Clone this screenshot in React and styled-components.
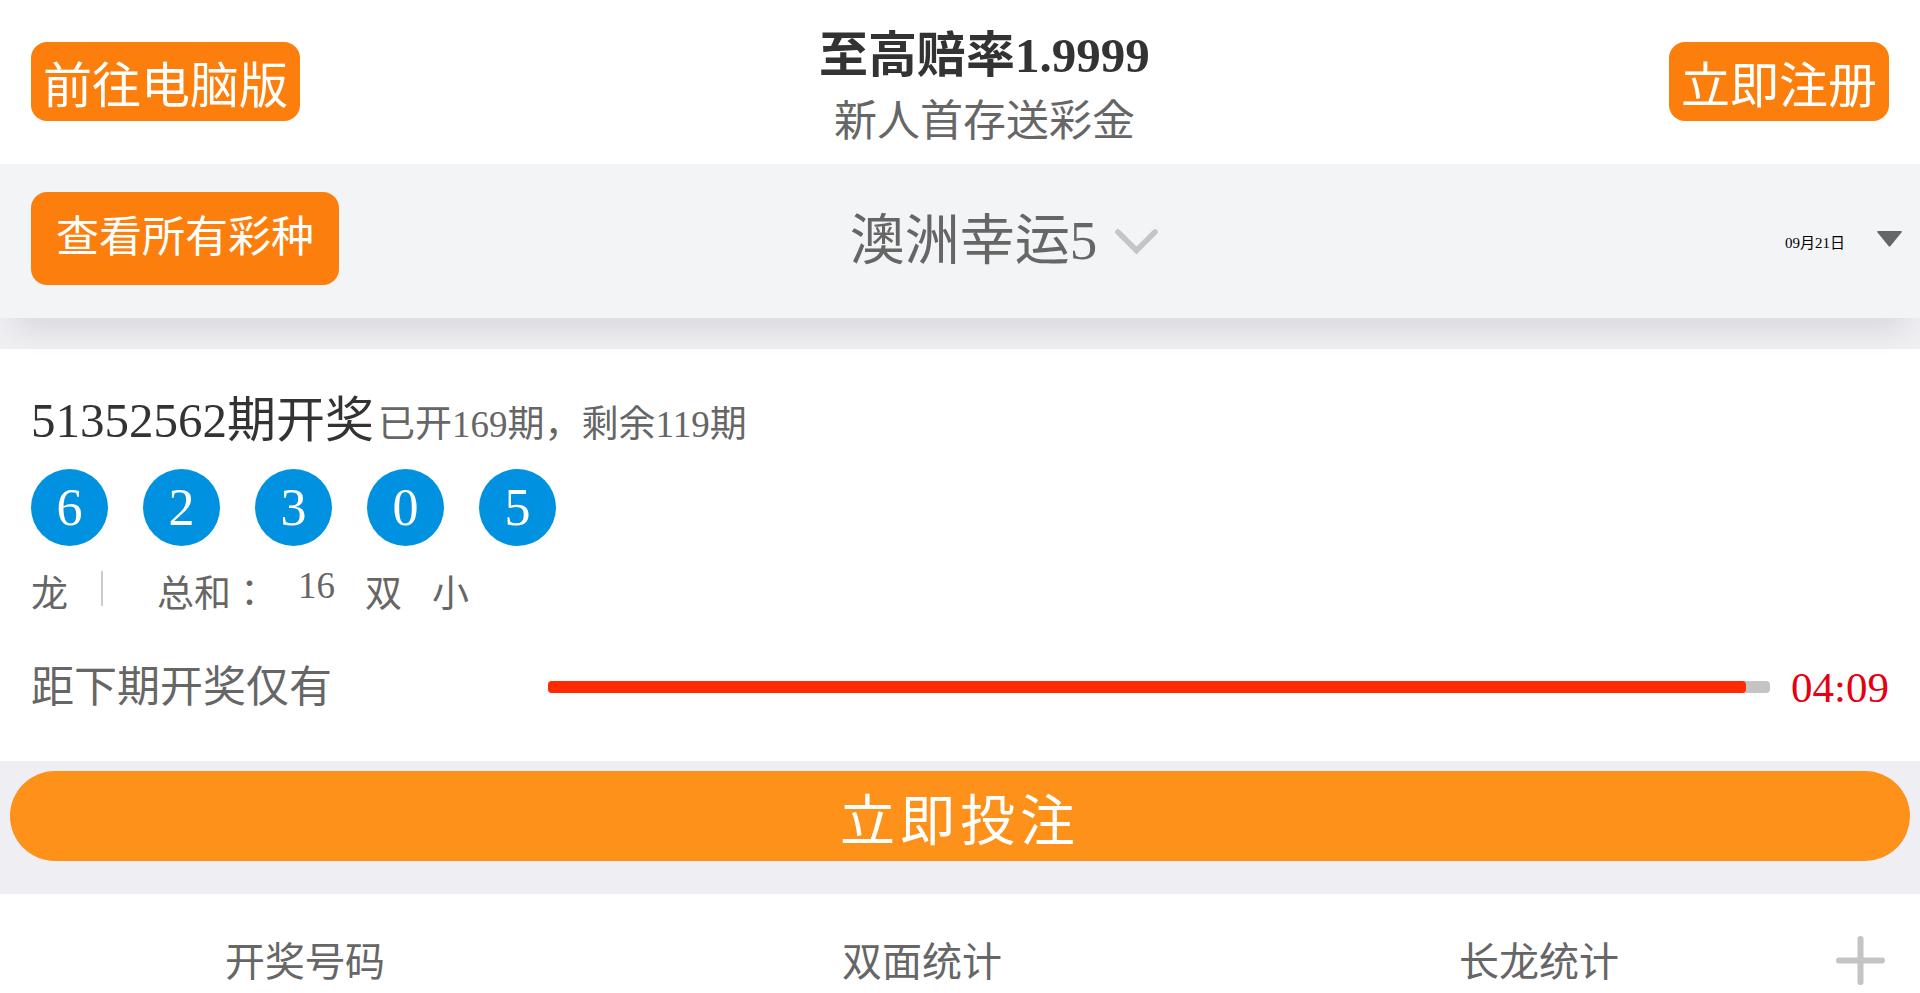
import styled, { createGlobalStyle } from "styled-components";

const GlobalStyle = createGlobalStyle`
  * {
    box-sizing: border-box;
    margin: 0;
    padding: 0;
  }
  body {
    background: #efeef3;
    color: #666;
    font-family: "Liberation Serif", "Noto Sans CJK JP", serif;
  }
  button {
    border: 0;
    background: none;
    color: inherit;
    font-family: inherit;
    cursor: pointer;
  }
  a {
    color: inherit;
    text-decoration: none;
  }
`;

const Header = styled.header`
  display: flex;
  justify-content: space-between;
  align-items: center;
  padding: 15px 31px 16px;
  background: #fff;
`;

const OrangeLink = styled.a`
  padding: 4px 12px;
  border-radius: 16px;
  background: #fc7e0c;
  color: #fff;
  font-size: 49px;
`;

const Slogan = styled.div`
  text-align: center;
  h1 {
    color: #333;
    font-size: 49px;
    font-weight: 700;
  }
  p {
    font-size: 43px;
  }
`;

const Nav = styled.nav`
  position: relative;
  display: flex;
  justify-content: space-between;
  align-items: flex-start;
  padding: 28px 18px 33px 31px;
  background: #f3f4f6;
  box-shadow: 0 25px 30px -15px rgba(0, 0, 0, 0.1);
`;

const AllLink = styled(OrangeLink)`
  padding: 10px 25px 21px;
  font-size: 43px;
`;

const LotteryButton = styled.button`
  display: flex;
  align-items: center;
  gap: 18px;
  padding-top: 3px;
  font-size: 55px;
  svg {
    margin-top: 14px;
  }
`;

const DateButton = styled.button`
  display: flex;
  justify-content: flex-end;
  align-items: center;
  align-self: stretch;
  gap: 32px;
  width: 233px;
  color: #000;
  font-size: 15px;
  span {
    padding-top: 6px;
  }
`;

const Draw = styled.section`
  margin-top: 31px;
  padding: 31px 31px 39px;
  background: #fff;
`;

const DrawTitle = styled.div`
  display: flex;
  align-items: baseline;
  gap: 4px;
  h2 {
    color: #333;
    font-size: 49px;
    font-weight: 400;
  }
  p {
    font-size: 37px;
  }
`;

const Balls = styled.ul`
  display: flex;
  gap: 35px;
  margin-top: 18px;
  list-style: none;
`;

const Ball = styled.li`
  display: flex;
  justify-content: center;
  align-items: center;
  width: 77px;
  height: 77px;
  border-radius: 50%;
  background: #0092e0;
  color: #fff;
  font-size: 52px;
`;

const Result = styled.div`
  display: flex;
  align-items: flex-start;
  gap: 30px;
  margin-top: 18px;
  font-size: 37px;
`;

const Divider = styled.i`
  width: 2px;
  height: 35px;
  margin: 7px 24px 0 3px;
  background: #ccc;
`;

const Countdown = styled.div`
  display: flex;
  align-items: center;
  min-height: 70px;
  margin-top: 34px;
  font-size: 43px;
`;

const CountLabel = styled.span`
  flex: none;
  align-self: flex-start;
  width: 517px;
`;

const Track = styled.div`
  flex: 1;
  height: 12px;
  border-radius: 4px;
  background: #c4c4c4;
`;

const Fill = styled.div`
  height: 100%;
  border-radius: 4px;
  background: #ff2a00;
`;

const Timer = styled.time`
  margin-left: 21px;
  color: #e60012;
`;

const BetButton = styled.button`
  display: block;
  width: calc(100% - 20px);
  margin: 10px 10px 33px;
  padding: 5px 0;
  border-radius: 45px;
  background: #fd911a;
  color: #fff;
  font-size: 55px;
  letter-spacing: 5px;
`;

const TabBar = styled.div`
  display: flex;
  align-items: flex-start;
  padding: 36px 35px 5px 0;
  background: #fff;
`;

const Tabs = styled.div`
  flex: 1;
  display: flex;
  justify-content: space-between;
  padding: 0 217px 0 225px;
`;

const Tab = styled.button`
  font-size: 40px;
`;

const MoreButton = styled.button`
  height: 49px;
  margin-top: 6px;
`;

const numbers = [6, 2, 3, 0, 5];
const tabs = ["开奖号码", "双面统计", "长龙统计"];
const progress = 98;

const Chevron = () => (
  <svg width="43" height="26" viewBox="0 0 43 26" fill="none">
    <path
      d="M3 3 21.5 21.5 40 3"
      stroke="#c4c5c6"
      strokeWidth="5.5"
      strokeLinecap="round"
    />
  </svg>
);

const Caret = () => (
  <svg width="25" height="16" viewBox="0 0 25 16">
    <path
      d="M1 0H24Q25.5 0 24.5 1.5L13.5 15Q12.5 16 11.5 15L.5 1.5Q-.5 0 1 0Z"
      fill="#666"
    />
  </svg>
);

const Plus = () => (
  <svg width="49" height="49" viewBox="0 0 49 49">
    <path
      d="M24.5 3V46M3 24.5H46"
      stroke="#c4c4c4"
      strokeWidth="6"
      strokeLinecap="round"
    />
  </svg>
);

export default function App() {
  return (
    <>
      <GlobalStyle />
      <Header>
        <OrangeLink href="#pc">前往电脑版</OrangeLink>
        <Slogan>
          <h1>至高赔率1.9999</h1>
          <p>新人首存送彩金</p>
        </Slogan>
        <OrangeLink href="#register">立即注册</OrangeLink>
      </Header>

      <Nav>
        <AllLink href="#all">查看所有彩种</AllLink>
        <LotteryButton type="button">
          澳洲幸运5
          <Chevron />
        </LotteryButton>
        <DateButton type="button">
          <span>09月21日</span>
          <Caret />
        </DateButton>
      </Nav>

      <Draw>
        <DrawTitle>
          <h2>51352562期开奖</h2>
          <p>已开169期，剩余119期</p>
        </DrawTitle>
        <Balls>
          {numbers.map((number) => (
            <Ball key={number}>{number}</Ball>
          ))}
        </Balls>
        <Result>
          <span>龙</span>
          <Divider />
          <span>总和：</span>
          <span>16</span>
          <span>双</span>
          <span>小</span>
        </Result>
        <Countdown>
          <CountLabel id="countdown">距下期开奖仅有</CountLabel>
          <Track
            role="progressbar"
            aria-labelledby="countdown"
            aria-valuenow={progress}
          >
            <Fill style={{ width: `${progress}%` }} />
          </Track>
          <Timer>04:09</Timer>
        </Countdown>
      </Draw>

      <BetButton type="button">立即投注</BetButton>

      <TabBar>
        <Tabs>
          {tabs.map((tab) => (
            <Tab key={tab} type="button">
              {tab}
            </Tab>
          ))}
        </Tabs>
        <MoreButton type="button" aria-label="更多">
          <Plus />
        </MoreButton>
      </TabBar>
    </>
  );
}
